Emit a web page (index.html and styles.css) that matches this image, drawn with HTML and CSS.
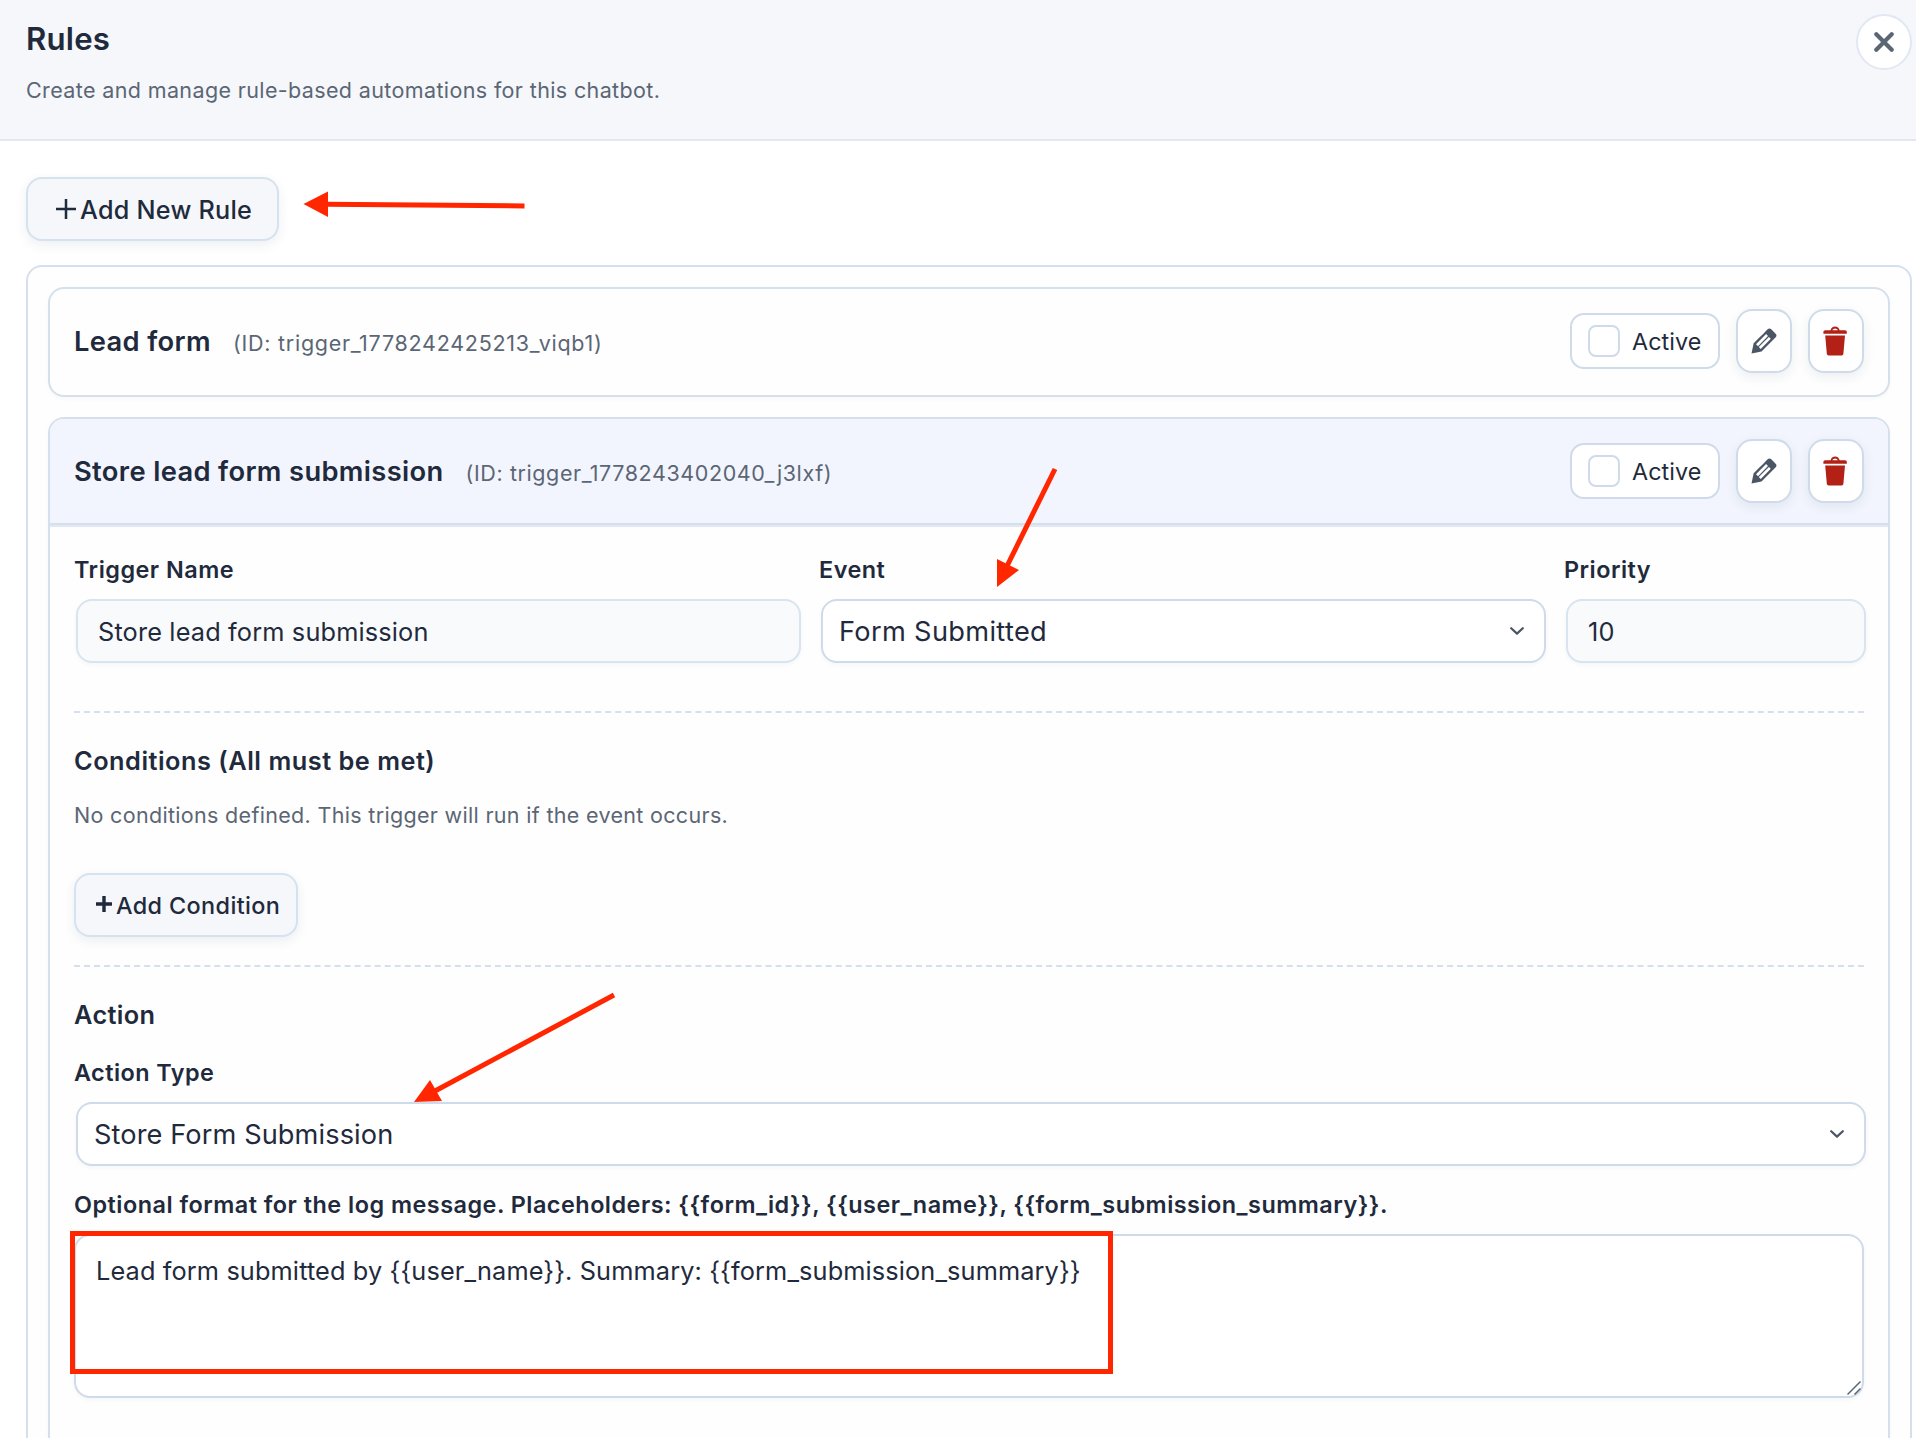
FILE: index.html
```html
<!DOCTYPE html>
<html lang="en">
<head>
  <meta charset="UTF-8">
  <meta name="viewport" content="width=device-width, initial-scale=1.0">
  <title>Rules</title>
  <link rel="stylesheet" href="styles.css">
</head>
<body>
  <!-- Shared icons -->
  <svg class="sprite" width="0" height="0">
    <symbol id="icon-edit" viewBox="0 0 20 20">
      <path d="M13.89 3.39l2.71 2.72c.46.46.42 1.24.03 1.64l-8.01 8.02-5.56 1.16 1.16-5.58s7.6-7.63 7.99-8.03c.39-.39 1.22-.39 1.68.07zm-2.73 2.79l-5.59 5.61 1.11 1.11 5.54-5.65zm-2.97 8.23l5.58-5.6-1.07-1.08-5.59 5.6z"/>
    </symbol>
    <symbol id="icon-trash" viewBox="0 0 20 20">
      <path d="M12 4h3c.6 0 1 .4 1 1v1H3V5c0-.6.5-1 1-1h3c.2-1.1 1.3-2 2.5-2s2.3.9 2.5 2zM8 4h3c-.2-.6-.9-1-1.5-1S8.2 3.4 8 4zM4 7h11l-.9 10.1c0 .5-.5.9-1 .9H5.9c-.5 0-.9-.4-1-.9L4 7z"/>
    </symbol>
    <symbol id="icon-chevron" viewBox="0 0 14 8">
      <path d="M1.2 1.2L7 6.6l5.8-5.4" fill="none" stroke="currentColor" stroke-width="2.2" stroke-linecap="round" stroke-linejoin="round"/>
    </symbol>
  </svg>

  <header class="header">
    <div>
      <h1>Rules</h1>
      <p>Create and manage rule-based automations for this chatbot.</p>
    </div>
    <button class="close-btn" aria-label="Close">
      <svg width="20" height="20" viewBox="0 0 20 20"><path d="M2.3 2.3l15.4 15.4M17.7 2.3L2.3 17.7" stroke="currentColor" stroke-width="4.2" stroke-linecap="round"/></svg>
    </button>
  </header>

  <main class="content">
    <button class="btn add-rule">
      <svg width="20" height="20" viewBox="0 0 20 20"><path d="M0 10h20M10 0v20" stroke="currentColor" stroke-width="2.5"/></svg>
      <span>Add New Rule</span>
    </button>

    <div class="rule-list">
      <!-- Collapsed rule -->
      <section class="rule">
        <div class="rule-head">
          <div class="rule-title">
            <span class="name">Lead form</span>
            <span class="id">(ID: trigger_1778242425213_viqb1)</span>
          </div>
          <div class="rule-actions">
            <label class="toggle"><input type="checkbox"><span>Active</span></label>
            <button class="icon-btn" aria-label="Edit"><svg width="36" height="36"><use href="#icon-edit"/></svg></button>
            <button class="icon-btn delete" aria-label="Delete"><svg width="36" height="36"><use href="#icon-trash"/></svg></button>
          </div>
        </div>
      </section>

      <!-- Open rule -->
      <section class="rule open">
        <div class="rule-head">
          <div class="rule-title">
            <span class="name">Store lead form submission</span>
            <span class="id id-second">(ID: trigger_1778243402040_j3lxf)</span>
          </div>
          <div class="rule-actions">
            <label class="toggle"><input type="checkbox"><span>Active</span></label>
            <button class="icon-btn" aria-label="Edit"><svg width="36" height="36"><use href="#icon-edit"/></svg></button>
            <button class="icon-btn delete" aria-label="Delete"><svg width="36" height="36"><use href="#icon-trash"/></svg></button>
          </div>
        </div>

        <div class="rule-body">
          <div class="fields">
            <div class="field">
              <label for="name">Trigger Name</label>
              <input type="text" id="name" value="Store lead form submission">
            </div>
            <div class="field">
              <label for="event">Event</label>
              <div class="select">
                <select id="event"><option>Form Submitted</option></select>
                <svg class="chevron" width="14" height="8"><use href="#icon-chevron"/></svg>
              </div>
            </div>
            <div class="field">
              <label for="priority">Priority</label>
              <input type="text" id="priority" value="10">
            </div>
          </div>

          <div class="block conditions">
            <h2>Conditions (All must be met)</h2>
            <p>No conditions defined. This trigger will run if the event occurs.</p>
            <button class="btn add-condition">
              <svg width="16" height="16" viewBox="0 0 16 16"><path d="M0 8h16M8 0v16" stroke="currentColor" stroke-width="3.4"/></svg>
              <span>Add Condition</span>
            </button>
          </div>

          <div class="block action">
            <h2>Action</h2>
            <div class="field">
              <label for="type" class="type-label">Action Type</label>
              <div class="select store">
                <select id="type"><option>Store Form Submission</option></select>
                <svg class="chevron" width="14" height="8"><use href="#icon-chevron"/></svg>
              </div>
            </div>
            <div class="field message">
              <label for="message">Optional format for the log message. Placeholders: {{form_id}}, {{user_name}}, {{form_submission_summary}}.</label>
              <div class="textarea">
                <textarea id="message" spellcheck="false">Lead form submitted by {{user_name}}. Summary: {{form_submission_summary}}</textarea>
                <svg class="grip" width="14" height="14" viewBox="0 0 14 14"><path d="M.5 13.5l13-13M7.500 13.5l6-6" stroke="#5b6675" stroke-width="1.5"/></svg>
              </div>
            </div>
          </div>
        </div>
      </section>
    </div>
  </main>

  <!-- Red callouts drawn over the screen -->
  <svg class="callouts" width="1916" height="1438" viewBox="0 0 1916 1438">
    <g stroke="#ff2600" stroke-width="5" fill="none">
      <path d="M326 204.2L524.5 206"/>
      <path d="M1007 566L1055 469"/>
      <path d="M435 1091L614 995"/>
      <rect x="72.5" y="1233.5" width="1038" height="138"/>
    </g>
    <g fill="#ff2600">
      <path d="M303.5 204L328 191.5V217z"/>
      <path d="M997 587V559L1019 570z"/>
      <path d="M414 1102L430 1080 442 1101z"/>
    </g>
  </svg>
</body>
</html>
```
FILE: styles.css
```css
* {
  margin: 0;
  padding: 0;
  box-sizing: border-box;
}
body {
  height: 1438px;
  overflow: hidden;
  position: relative;
  background: #fff;
  color: #1f2a3c;
  font-family: Inter, "Liberation Sans", sans-serif;
}
button, input, select, textarea {
  font-family: inherit;
  color: inherit;
}
.sprite {
  position: absolute;
}

/* Header */
.header {
  display: flex;
  justify-content: space-between;
  align-items: flex-start;
  height: 141px;
  padding: 14px 4px 0 26px;
  background: #f5f7fb;
  border-bottom: 2px solid #e2e8f3;
}
.header h1 {
  margin-top: 5px;
  font-size: 31.2px;
  line-height: 40px;
  font-weight: 600;
  letter-spacing: 0.2px;
}
.header p {
  margin-top: 16px;
  font-size: 21.5px;
  line-height: 30px;
  letter-spacing: 0.37px;
  color: #5b6675;
}
.close-btn {
  display: flex;
  align-items: center;
  justify-content: center;
  width: 56px;
  height: 56px;
  background: #fff;
  border: 2px solid #e2e8f3;
  border-radius: 50%;
  color: #5b6675;
}

/* Buttons */
.content {
  padding: 36px 4px 0 26px;
}
.btn {
  display: flex;
  align-items: center;
  height: 64px;
  background: #f5f7fb;
  border: 2px solid #d5e2f0;
  border-radius: 16px;
  box-shadow: 0 4px 12px rgba(30, 50, 80, 0.08);
  font-weight: 500;
}
.add-rule {
  width: 253px;
  padding-left: 28px;
  gap: 4px;
  font-size: 25.2px;
  letter-spacing: 0.24px;
}
.add-rule span {
  padding-top: 2px;
}
.add-condition {
  width: 224px;
  margin-top: 43px;
  padding-left: 20px;
  gap: 4px;
  font-size: 23.4px;
  letter-spacing: 0.38px;
}
.add-condition svg {
  margin-bottom: 3px;
}

/* Rules */
.rule-list {
  height: 1173px;
  margin-top: 24px;
  padding: 20px 20px 0;
  background: #fefefe;
  border: 2px solid #d5e0ec;
  border-bottom: none;
  border-radius: 16px 16px 0 0;
}
.rule {
  border: 2px solid #d5e0ec;
  border-radius: 16px;
  box-shadow: 0 2px 4px rgba(30, 50, 80, 0.03);
}
.rule.open {
  height: 1021px;
  margin-top: 20px;
  border-bottom: none;
  border-radius: 16px 16px 0 0;
}
.rule-head {
  display: flex;
  align-items: center;
  justify-content: space-between;
  padding: 20px 24px;
  border-bottom: 2px solid transparent;
}
.rule.open .rule-head {
  background: #f2f5fd;
  border-bottom-color: #d5e0ec;
  border-radius: 14px 14px 0 0;
}
.rule-title {
  display: flex;
  align-items: baseline;
  gap: 22px;
}
.name {
  font-size: 27.3px;
  font-weight: 600;
  letter-spacing: 0.36px;
}
.id {
  font-size: 21.5px;
  letter-spacing: 0.74px;
  color: #5b6675;
}
.id-second {
  letter-spacing: 0.59px;
}
.rule-actions {
  display: flex;
  align-items: center;
  gap: 16px;
}
.toggle {
  display: flex;
  align-items: center;
  gap: 12px;
  width: 150px;
  height: 56px;
  padding-left: 16px;
  background: #fff;
  border: 2px solid #cfdbea;
  border-radius: 14px;
  font-size: 23.3px;
  letter-spacing: 0.1px;
}
.toggle input {
  appearance: none;
  width: 32px;
  height: 32px;
  background: #fff;
  border: 2px solid #cfdbea;
  border-radius: 8px;
}
.icon-btn {
  display: flex;
  align-items: center;
  justify-content: center;
  width: 56px;
  height: 64px;
  background: #fff;
  border: 2px solid #cfdbea;
  border-radius: 16px;
  box-shadow: 0 4px 12px rgba(30, 50, 80, 0.08);
  fill: #4b5565;
}
.icon-btn svg {
  flex: none;
}
.icon-btn.delete {
  fill: #b32015;
}
.rule-body {
  padding: 26px 24px 0;
  border-top: 2px solid #e2e8f3;
}

/* Fields */
.fields {
  display: grid;
  grid-template-columns: 725px 725px 300px;
  gap: 20px;
}
.field label {
  display: block;
  margin-bottom: 13px;
  font-size: 23.4px;
  line-height: 33px;
  font-weight: 600;
  letter-spacing: 0.5px;
}
.field .type-label {
  letter-spacing: 0.45px;
}
.field input, .select select {
  display: block;
  width: 100%;
  height: 64px;
  border: 2px solid #cfdbea;
  border-radius: 16px;
  box-shadow: 0 2px 4px rgba(30, 50, 80, 0.04);
}
.field input {
  margin-left: 2px;
  padding: 1px 20px 0;
  background: #f9fafc;
  border-color: #d8e4f0;
  font-size: 25.3px;
  letter-spacing: 0.16px;
}
.select {
  position: relative;
  margin-left: 2px;
  margin-right: -2px;
}
.select select {
  appearance: none;
  padding: 0 16px;
  background: #fff;
  font-size: 27.2px;
  letter-spacing: 0.34px;
}
.select.store select {
  letter-spacing: 0.1px;
}
.chevron {
  position: absolute;
  right: 22px;
  top: 28px;
  color: #4b5565;
}

/* Blocks under the dashed lines */
.block {
  padding-top: 31px;
  border-top: 2px dashed #d5e0ec;
}
.block h2 {
  font-size: 25.3px;
  line-height: 34px;
  font-weight: 600;
  letter-spacing: 0.52px;
}
.action h2 {
  margin-bottom: 24px;
  letter-spacing: 0.36px;
}
.block p {
  margin-top: 22px;
  font-size: 21.5px;
  line-height: 30px;
  letter-spacing: 0.32px;
  color: #5b6675;
}
.conditions {
  margin-top: 48px;
}
.action {
  margin-top: 28px;
}
.message {
  margin-top: 22px;
}
.message label {
  letter-spacing: 0.495px;
}
.textarea {
  position: relative;
}
.textarea textarea {
  display: block;
  width: 100%;
  height: 164px;
  padding: 17px 20px;
  resize: none;
  background: #fff;
  border: 2px solid #cfdbea;
  border-radius: 16px;
  box-shadow: 0 2px 4px rgba(30, 50, 80, 0.04);
  font-size: 25.3px;
  line-height: 36px;
  letter-spacing: 0.13px;
}
.grip {
  position: absolute;
  right: 3px;
  bottom: 3px;
}

.callouts {
  position: absolute;
  left: 0;
  top: 0;
}
```
